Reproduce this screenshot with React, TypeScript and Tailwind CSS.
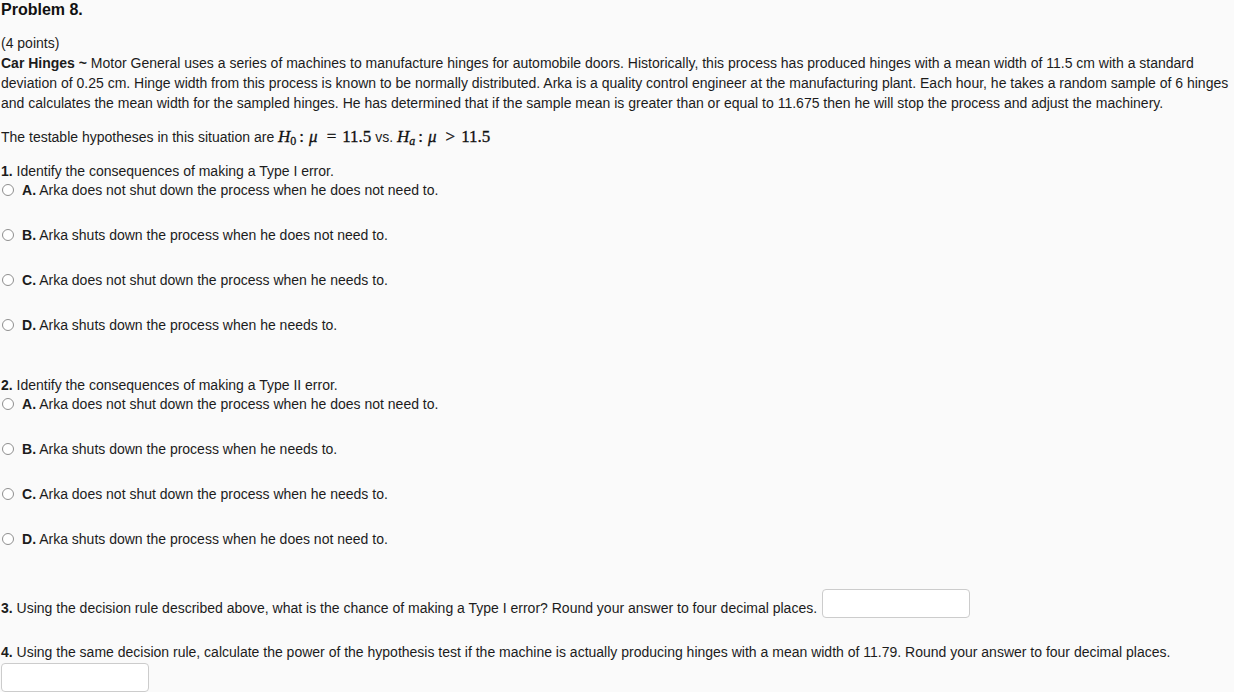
import React from "react";

type Choice = { letter: string; text: string };

const q1: Choice[] = [
  { letter: "A", text: "Arka does not shut down the process when he does not need to." },
  { letter: "B", text: "Arka shuts down the process when he does not need to." },
  { letter: "C", text: "Arka does not shut down the process when he needs to." },
  { letter: "D", text: "Arka shuts down the process when he needs to." },
];

const q2: Choice[] = [
  { letter: "A", text: "Arka does not shut down the process when he does not need to." },
  { letter: "B", text: "Arka shuts down the process when he needs to." },
  { letter: "C", text: "Arka does not shut down the process when he needs to." },
  { letter: "D", text: "Arka shuts down the process when he does not need to." },
];

const Radio = () => (
  <span className="inline-block w-[12px] h-[12px] rounded-full border border-[#8f8f8f] bg-white shrink-0" />
);

const ChoiceList = ({ items }: { items: Choice[] }) => (
  <div className="flex flex-col gap-[25px]">
    {items.map((c) => (
      <label key={c.letter} className="flex items-center h-[20px] pl-[1px]">
        <Radio />
        <span className="ml-[8px]">
          <b>{c.letter}.</b> {c.text}
        </span>
      </label>
    ))}
  </div>
);

const Math = ({ children }: { children: React.ReactNode }) => (
  <span className="font-['Liberation_Serif',serif] text-[17px] text-[#111] [-webkit-text-stroke:0.3px_#111]">
    {children}
  </span>
);

const AnswerBox = ({ className = "" }: { className?: string }) => (
  <input
    type="text"
    className={`w-[148px] h-[29px] bg-white border border-[#cccccc] rounded-[4px] outline-none ${className}`}
  />
);

export default function App() {
  return (
    <div className="min-h-[692px] w-[1234px] bg-[#fafafa] text-[#1c1c1c] font-['Liberation_Sans',Arial,sans-serif] text-[14px] leading-[20px] pl-[1px] overflow-hidden">
      <h1 className="text-[16px] font-bold leading-[20px] text-[#111]">Problem 8.</h1>

      <div className="mt-[13px]">(4 points)</div>
      <p>
        <b>Car Hinges ~</b> Motor General uses a series of machines to manufacture hinges for automobile doors.
        Historically, this process has produced hinges with a mean width of 11.5 cm with a standard
        <br />
        deviation of 0.25 cm. Hinge width from this process is known to be normally distributed. Arka is a quality
        control engineer at the manufacturing plant. Each hour, he takes a random sample of 6 hinges
        <br />
        and calculates the mean width for the sampled hinges. He has determined that if the sample mean is greater
        than or equal to 11.675 then he will stop the process and adjust the machinery.
      </p>

      <p className="mt-[14px] h-[20px]">
        The testable hypotheses in this situation are{" "}
        <Math>
          <i>H</i>
          <sub className="text-[12px]">0</sub>
          <span className="ml-[3px] mr-[5px]">:</span>
          <i>μ</i>
          <span className="ml-[9px] mr-[6px]">=</span>11.5
        </Math>{" "}
        vs.{" "}
        <Math>
          <i>H</i>
          <sub className="text-[12px]">
            <i>a</i>
          </sub>
          <span className="ml-[3px] mr-[5px]">:</span>
          <i>μ</i>
          <span className="ml-[9px] mr-[6px]">&gt;</span>11.5
        </Math>
      </p>

      <div className="mt-[14px] h-[19px] leading-[20px]">
        <b>1.</b> Identify the consequences of making a Type I error.
      </div>
      <ChoiceList items={q1} />

      <div className="mt-[40px] h-[19px] leading-[20px]">
        <b>2.</b> Identify the consequences of making a Type II error.
      </div>
      <ChoiceList items={q2} />

      <div className="mt-[40px] flex items-end">
        <span>
          <b>3.</b> Using the decision rule described above, what is the chance of making a Type I error? Round your
          answer to four decimal places.
        </span>
        <AnswerBox className="ml-[5px]" />
      </div>

      <div className="mt-[24px] h-[21px]">
        <b>4.</b> Using the same decision rule, calculate the power of the hypothesis test if the machine is actually
        producing hinges with a mean width of 11.79. Round your answer to four decimal places.
      </div>
      <AnswerBox />
    </div>
  );
}
